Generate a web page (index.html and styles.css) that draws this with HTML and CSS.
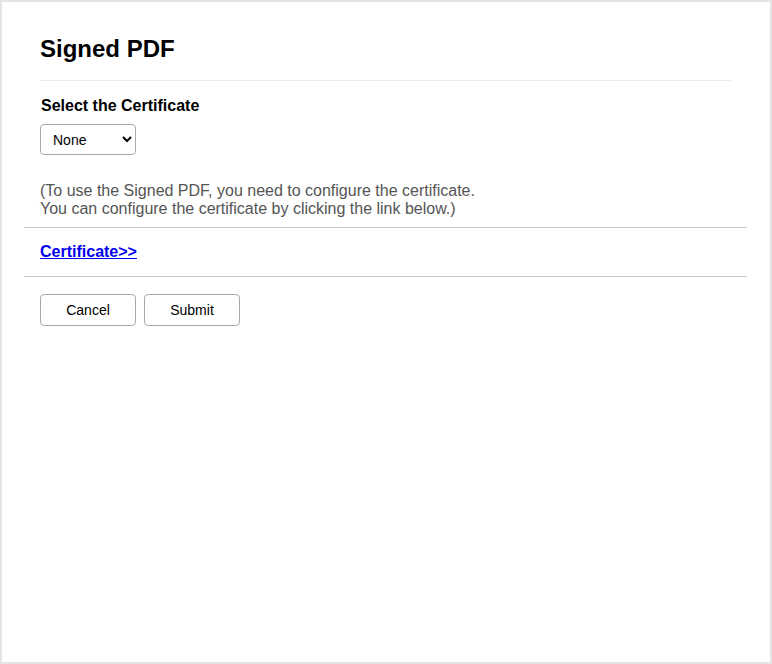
FILE: index.html
```html
<!DOCTYPE html>
<html lang="en">
<head>
    <meta charset="UTF-8">
    <meta name="viewport" content="width=device-width, initial-scale=1.0">
    <title>Signed PDF</title>
    <link rel="stylesheet" href="styles.css">
</head>
<body>
    <div class="page">
        <div class="section">
            <h1 class="title">Signed PDF</h1>
            <hr class="title-rule">
            <div class="field-label">Select the Certificate</div>
            <select class="cert-select">
                <option>None</option>
            </select>
            <p class="note">(To use the Signed PDF, you need to configure the certificate.<br>You can configure the certificate by clicking the link below.)</p>
        </div>
        <div class="section link-row">
            <a href="#" class="cert-link">Certificate&gt;&gt;</a>
        </div>
        <div class="section buttons">
            <button class="button">Cancel</button>
            <button class="button">Submit</button>
        </div>
    </div>
</body>
</html>
```

FILE: styles.css
```css
body {
    margin: 0;
    background-color: #ffffff;
    color: #000000;
    font-family: "Liberation Sans", Arial, sans-serif;
}
.page {
    height: 664px;
    box-sizing: border-box;
    border: 2px solid #e4e4e4;
    padding: 0 23px 0 22px;
}
.section {
    padding: 0 16px;
}
.title {
    font-size: 24px;
    line-height: 28px;
    font-weight: bold;
    margin: 33px 0 0 0;
}
.title-rule {
    border: none;
    border-top: 1px solid #ececec;
    margin: 17px 0 0 0;
}
.field-label {
    font-size: 16px;
    line-height: 20px;
    font-weight: bold;
    margin: 15px 0 0 1px;
}
.cert-select {
    display: block;
    margin-top: 8px;
    width: 96px;
    height: 31px;
    padding: 0 8px;
    font-family: "Liberation Sans", Arial, sans-serif;
    font-size: 14px;
    color: #000000;
    background-color: #ffffff;
    border: 1px solid #a8a8a8;
    border-radius: 4px;
}
.note {
    margin: 27px 0 9px 0;
    font-size: 16px;
    line-height: 18px;
    color: #555555;
}
.link-row {
    border-top: 1px solid #cccccc;
    border-bottom: 1px solid #cccccc;
    padding-top: 15px;
    padding-bottom: 15px;
    line-height: 18px;
}
.cert-link {
    font-size: 16px;
    font-weight: bold;
    color: #0000ee;
}
.buttons {
    display: flex;
    gap: 8px;
    margin-top: 17px;
}
.button {
    width: 96px;
    height: 32px;
    background-color: #ffffff;
    border: 1px solid #a8a8a8;
    border-radius: 4px;
    color: #000000;
    font-family: "Liberation Sans", Arial, sans-serif;
    font-size: 14px;
    cursor: pointer;
}
.button:hover {
    background-color: #f2f2f2;
}
```
